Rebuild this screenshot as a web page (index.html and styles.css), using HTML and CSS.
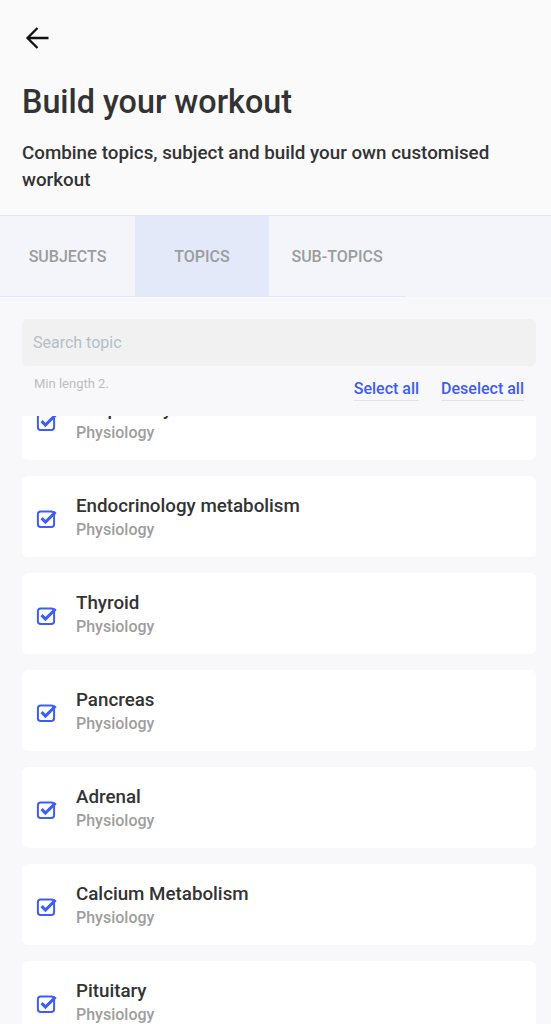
FILE: index.html
```html
<!DOCTYPE html>
<html lang="en">
<head>
<meta charset="utf-8">
<title>Build your workout</title>
<link rel="stylesheet" href="styles.css">
</head>
<body>
<div class="page">
  <header class="header">
    <button class="back" aria-label="Back">
      <svg width="24" height="24" viewBox="0 0 24 24" fill="none" stroke="#111" stroke-width="2.3" stroke-linecap="butt" stroke-linejoin="miter"><path d="M23.5 12H2.5M12.5 2L2.5 12l10 10"/></svg>
    </button>
    <h1 class="title">Build your workout</h1>
    <p class="subtitle">Combine topics, subject and build your own customised workout</p>
  </header>

  <nav class="tabs">
    <div class="tab-strip">
      <div class="tab tab-subjects">SUBJECTS</div>
      <div class="tab tab-topics active">TOPICS</div>
      <div class="tab tab-sub">SUB-TOPICS</div>
    </div>
  </nav>

  <section class="content">
    <div class="search">Search topic</div>
    <div class="meta">
      <span class="hint">Min length 2.</span>
      <div class="actions">
        <a class="action">Select all</a>
        <a class="action">Deselect all</a>
      </div>
    </div>

    <div class="list-viewport">
      <ul class="list">
        <li class="card"><span class="cb"><svg width="22" height="22" viewBox="0 0 22 22"><rect x="1.9" y="4.4" width="16.2" height="15.6" rx="2.8" fill="none" stroke="#3d5ef6" stroke-width="2"/><path d="M5.6 11.2l3.8 3.8L19.6 5" fill="none" stroke="#3d5ef6" stroke-width="3.1"/></svg></span><div class="txt"><div class="name">Respiratory</div><div class="sub">Physiology</div></div></li>
        <li class="card"><span class="cb"><svg width="22" height="22" viewBox="0 0 22 22"><rect x="1.9" y="4.4" width="16.2" height="15.6" rx="2.8" fill="none" stroke="#3d5ef6" stroke-width="2"/><path d="M5.6 11.2l3.8 3.8L19.6 5" fill="none" stroke="#3d5ef6" stroke-width="3.1"/></svg></span><div class="txt"><div class="name">Endocrinology metabolism</div><div class="sub">Physiology</div></div></li>
        <li class="card"><span class="cb"><svg width="22" height="22" viewBox="0 0 22 22"><rect x="1.9" y="4.4" width="16.2" height="15.6" rx="2.8" fill="none" stroke="#3d5ef6" stroke-width="2"/><path d="M5.6 11.2l3.8 3.8L19.6 5" fill="none" stroke="#3d5ef6" stroke-width="3.1"/></svg></span><div class="txt"><div class="name">Thyroid</div><div class="sub">Physiology</div></div></li>
        <li class="card"><span class="cb"><svg width="22" height="22" viewBox="0 0 22 22"><rect x="1.9" y="4.4" width="16.2" height="15.6" rx="2.8" fill="none" stroke="#3d5ef6" stroke-width="2"/><path d="M5.6 11.2l3.8 3.8L19.6 5" fill="none" stroke="#3d5ef6" stroke-width="3.1"/></svg></span><div class="txt"><div class="name">Pancreas</div><div class="sub">Physiology</div></div></li>
        <li class="card"><span class="cb"><svg width="22" height="22" viewBox="0 0 22 22"><rect x="1.9" y="4.4" width="16.2" height="15.6" rx="2.8" fill="none" stroke="#3d5ef6" stroke-width="2"/><path d="M5.6 11.2l3.8 3.8L19.6 5" fill="none" stroke="#3d5ef6" stroke-width="3.1"/></svg></span><div class="txt"><div class="name">Adrenal</div><div class="sub">Physiology</div></div></li>
        <li class="card"><span class="cb"><svg width="22" height="22" viewBox="0 0 22 22"><rect x="1.9" y="4.4" width="16.2" height="15.6" rx="2.8" fill="none" stroke="#3d5ef6" stroke-width="2"/><path d="M5.6 11.2l3.8 3.8L19.6 5" fill="none" stroke="#3d5ef6" stroke-width="3.1"/></svg></span><div class="txt"><div class="name">Calcium Metabolism</div><div class="sub">Physiology</div></div></li>
        <li class="card"><span class="cb"><svg width="22" height="22" viewBox="0 0 22 22"><rect x="1.9" y="4.4" width="16.2" height="15.6" rx="2.8" fill="none" stroke="#3d5ef6" stroke-width="2"/><path d="M5.6 11.2l3.8 3.8L19.6 5" fill="none" stroke="#3d5ef6" stroke-width="3.1"/></svg></span><div class="txt"><div class="name">Pituitary</div><div class="sub">Physiology</div></div></li>
      </ul>
    </div>
  </section>
</div>
</body>
</html>
```

FILE: styles.css
```css
* { box-sizing: border-box; }
html, body { margin: 0; padding: 0; }
body {
  font-family: Roboto, "Liberation Sans", sans-serif;
  background: #f8f8fa;
  color: #333;
}
.page {
  height: 1024px;
  overflow: hidden;
  display: flex;
  flex-direction: column;
}
.header {
  background: #fafafa;
  padding: 26px 22px 21px;
  border-bottom: 1px solid #e4e5ea;
}
.back {
  display: block;
  width: 24px;
  height: 24px;
  margin: 0 0 0 3px;
  padding: 0;
  border: 0;
  background: none;
}
.back svg { display: block; }
.title {
  margin: 32px 0 0;
  font-size: 32.3px;
  line-height: 40px;
  font-weight: 500;
  color: #333;
}
.subtitle {
  margin: 18px 0 0;
  font-size: 18.8px;
  line-height: 27px;
  font-weight: 500;
  color: #333;
}
.tabs {
  background: #f4f5fa;
}
.tab-strip {
  display: flex;
  width: 405px;
  border-bottom: 1px solid #e1e8f8;
}
.tab {
  height: 80px;
  display: flex;
  align-items: center;
  justify-content: center;
  font-size: 16px;
  font-weight: 500;
  color: #9c9c9c;
}
.tab-subjects { width: 135px; }
.tab-topics { width: 134px; }
.tab-sub { width: 136px; }
.tab.active { background: #e3e9f8; }
.content {
  flex: 1;
  display: flex;
  flex-direction: column;
  padding: 22px 15px 0 22px;
  min-height: 0;
}
.search {
  height: 47px;
  background: #f1f1f2;
  border-radius: 5px;
  padding: 0 11px;
  display: flex;
  align-items: center;
  font-size: 16px;
  color: #b3c0c4;
}
.meta {
  display: flex;
  justify-content: space-between;
  align-items: flex-start;
  padding: 10px 12px 0 12px;
  height: 50px;
}
.hint {
  font-size: 13px;
  color: #bdbdbd;
  line-height: 15px;
}
.actions {
  display: flex;
  gap: 22px;
  margin-top: 3px;
}
.action {
  font-size: 16px;
  font-weight: 500;
  color: #3d5cf6;
  line-height: 20px;
  padding-bottom: 1px;
  border-bottom: 1px solid #e2e3e9;
}
.list-viewport {
  flex: 1;
  overflow: hidden;
  min-height: 0;
}
.list {
  list-style: none;
  margin: -37px 0 0;
  padding: 0;
  display: flex;
  flex-direction: column;
  gap: 16px;
}
.card {
  background: #fff;
  border-radius: 6px;
  height: 81px;
  padding: 18px 15px 15px 14px;
  display: flex;
  align-items: center;
  gap: 18px;
}
.cb { width: 22px; height: 22px; flex: none; }
.cb svg { display: block; }
.txt { display: flex; flex-direction: column; }
.name {
  font-size: 18.75px;
  line-height: 24px;
  font-weight: 500;
  color: #333;
}
.sub {
  font-size: 16px;
  line-height: 24px;
  font-weight: 500;
  color: #9e9e9e;
}
```
